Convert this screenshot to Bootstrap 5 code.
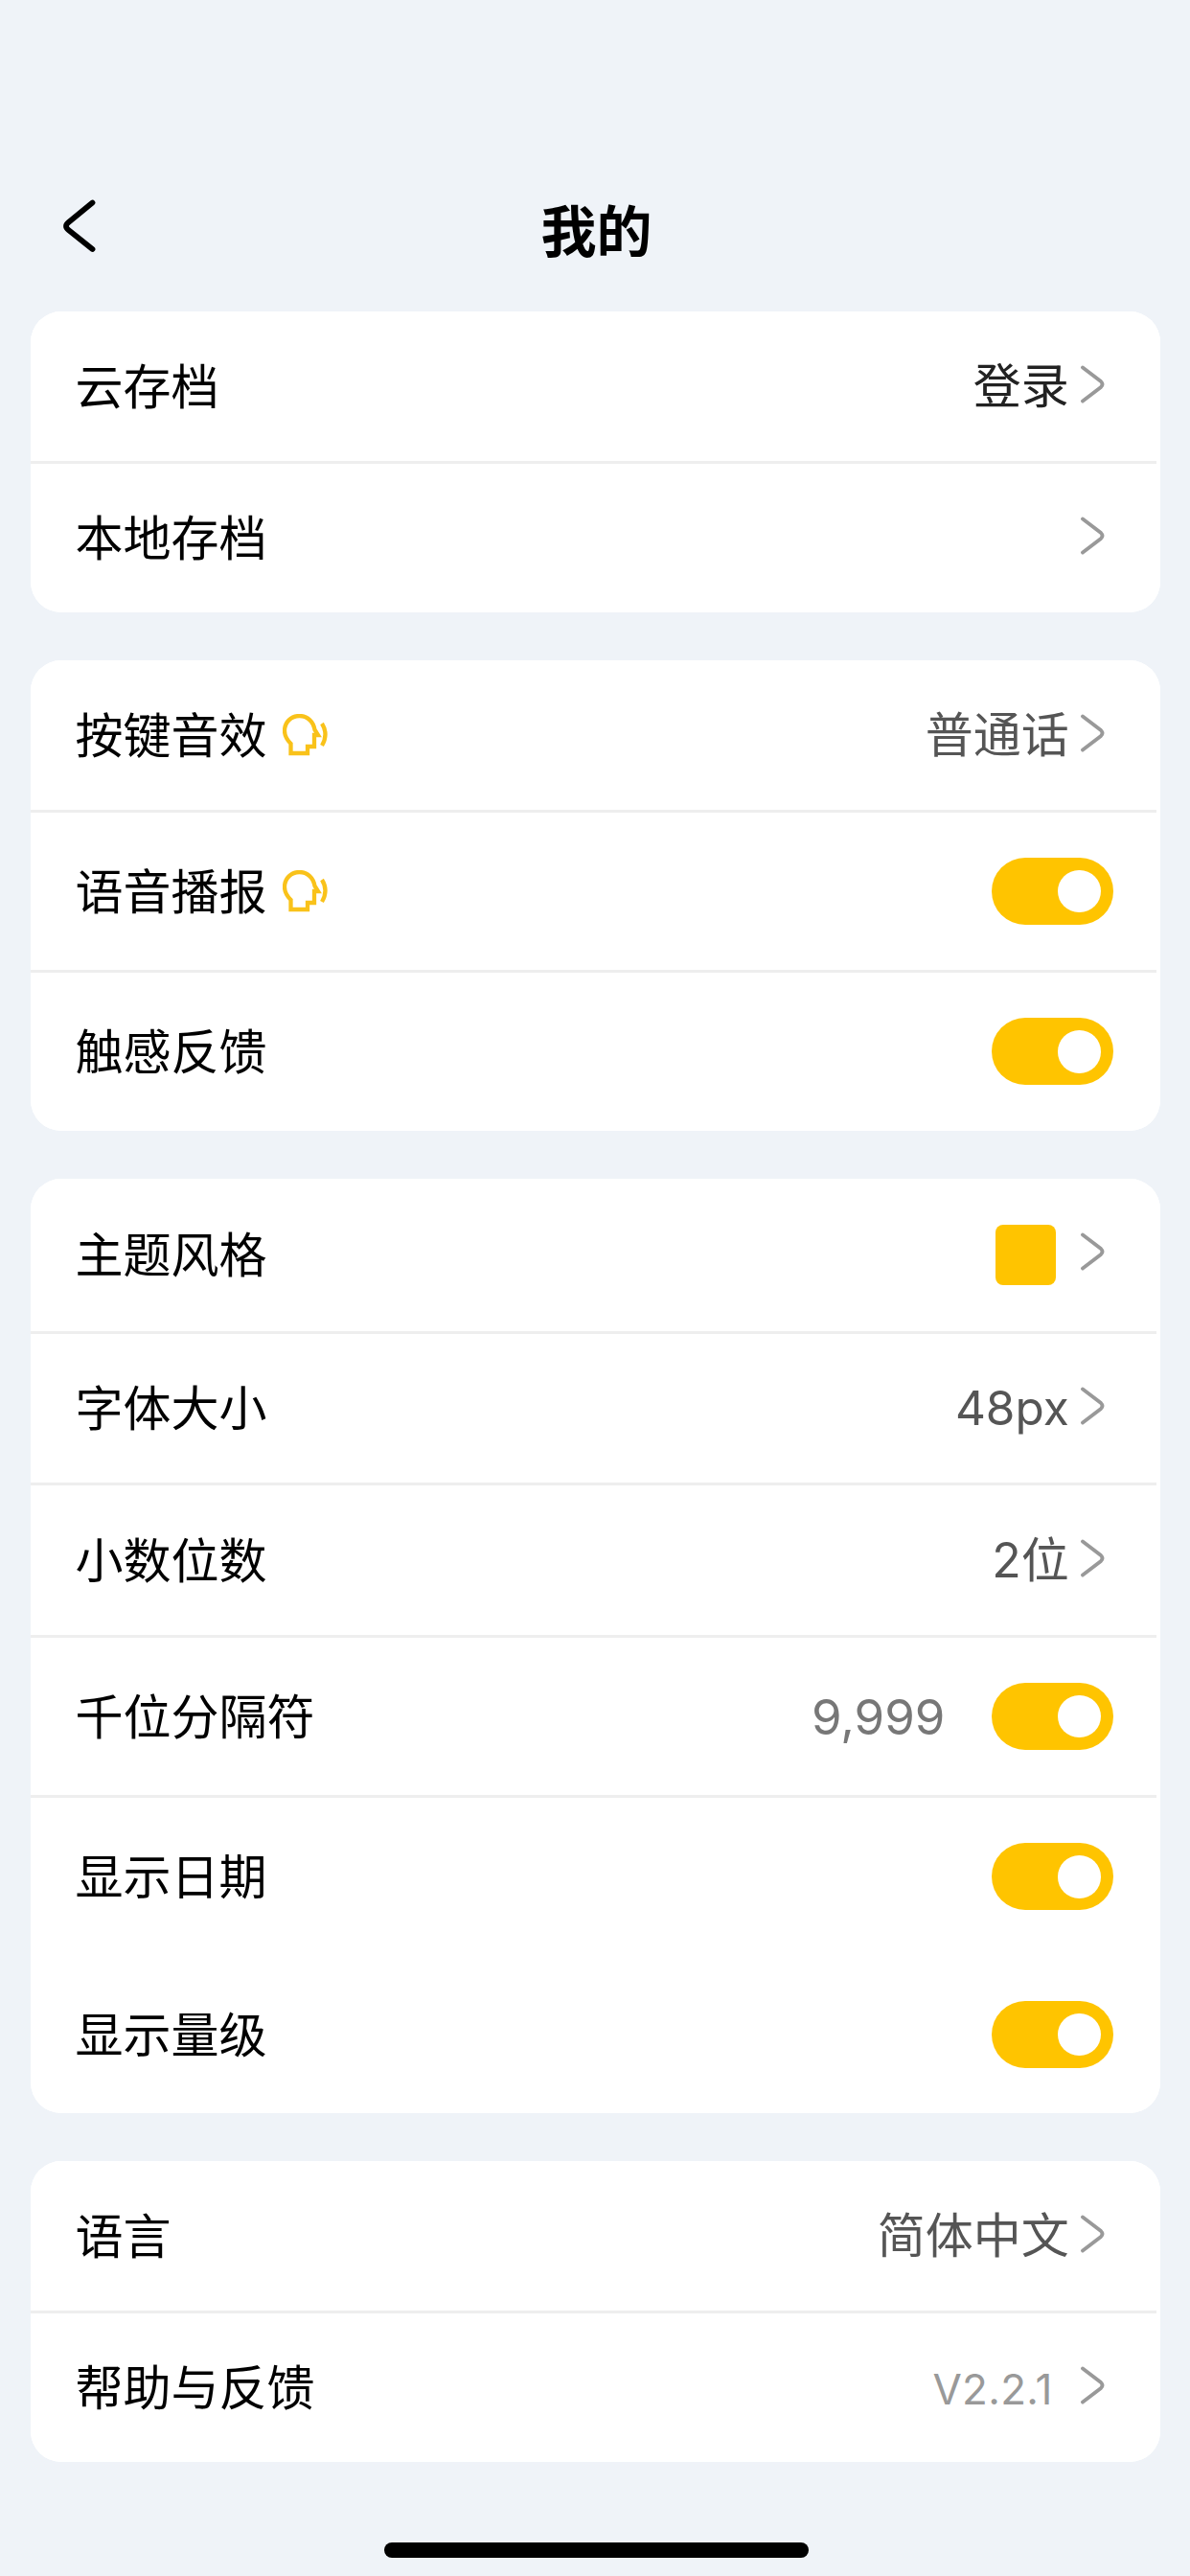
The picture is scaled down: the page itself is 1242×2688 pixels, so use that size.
<!DOCTYPE html>
<html lang="zh-CN">
<head>
<meta charset="utf-8">
<meta name="viewport" content="width=device-width, initial-scale=1">
<title>我的</title>
<link rel="stylesheet" href="https://cdn.jsdelivr.net/npm/bootstrap@5.3.0/dist/css/bootstrap.min.css">
<style>
  body { background: #eff3f8; color: #000; font-family: Inter, "Noto Sans CJK SC", sans-serif; font-size: 50px; line-height: 1; }
  .screen { height: 2688px; padding: 0 31px 0 32px; overflow: hidden; }
  .topbar { height: 325px; padding: 160px 0 0 33px; }
  .topbar h1 { font-size: 58px; font-weight: 700; line-height: 1; margin: 0; padding-top: 53px; }
  .topbar .side { width: 36px; padding-top: 47px; }
  .topbar .side-end { width: 67px; }
  .groups { gap: 50px; }
  .group { border-radius: 32px; overflow: hidden; background: #fff; }
  .item { height: 155.5px; padding: 0 49.5px 0 46.5px; background: #fff; color: #000; border: 0; }
  .item.tall { height: 164.5px; }
  .item.theme { height: 159px; }
  .item-label { padding-top: 2px; }
  .rule { height: 3px; margin-right: 4px; background: #eee; }
  .chev { width: 26px; height: 42px; margin: 0 8.8px 4px 11px; }
  .value { color: #555; padding-top: 1px; }
  .value-latin { font-size: 49.5px; padding-top: 0; }
  .value-login { color: #222; padding-top: 1px; }
  .sample { color: #777; font-size: 51px; margin-right: 48px; padding-top: 2px; }
  .version { color: #999; font-size: 44px; letter-spacing: .3px; margin-right: 17px; padding-top: 4px; }
  .voice { margin-left: 16px; }
  .toggle { width: 127px; height: 70px; border-radius: 35px; background: #ffc400; padding-right: 13px; }
  .knob { width: 44.5px; height: 44.5px; border-radius: 50%; background: #fff; }
  .swatch { width: 63px; height: 63px; border-radius: 8px; background: #ffc400; margin-right: 14px; }
  .item.theme .chev { margin-bottom: 7px; }
  .homebar { width: 443px; height: 16px; border-radius: 8px; background: #000; margin: 84px auto 0; transform: translateX(1px); }
</style>
</head>
<body>
<svg class="d-none">
  <symbol id="chev" viewBox="0 0 26 42"><path d="M3 3.500 L22 18 Q25 21 22 24 L3 38.500" fill="none" stroke="#999" stroke-width="3.800" stroke-linecap="round"/></symbol>
  <symbol id="voice" viewBox="0 0 48 44"><path d="M8.500 41 V31 C4.500 27 2 22.500 2 17.500 C2 8.500 9 2 17.500 2 C26 2 32 8 33.500 16.500 L37 22 H33 V34 H26 V41 Z M41 10 Q48 21 41 33" fill="none" stroke="#f9c21a" stroke-width="4.300"/></symbol>
</svg>
<main class="screen d-flex flex-column">
  <header class="topbar d-flex justify-content-between align-items-start">
    <div class="side"><svg class="d-block" width="36" height="58" viewBox="0 0 36 58"><path d="M31.500 4.500 L6.500 25 Q1.500 29 6.500 33 L31.500 53" fill="none" stroke="#000" stroke-width="5.800" stroke-linecap="round"/></svg></div>
    <h1>我的</h1>
    <div class="side-end"></div>
  </header>
  <div class="groups d-flex flex-column">
    <section class="group">
      <div class="item d-flex align-items-center"><span class="item-label me-auto">云存档</span><span class="value-login">登录</span><svg class="chev"><use href="#chev"/></svg></div>
      <div class="rule"></div>
      <div class="item d-flex align-items-center"><span class="item-label me-auto">本地存档</span><svg class="chev"><use href="#chev"/></svg></div>
    </section>
    <section class="group">
      <div class="item d-flex align-items-center"><span class="item-label">按键音效</span><svg class="voice me-auto" width="48" height="44"><use href="#voice"/></svg><span class="value">普通话</span><svg class="chev"><use href="#chev"/></svg></div>
      <div class="rule"></div>
      <div class="item tall d-flex align-items-center"><span class="item-label">语音播报</span><svg class="voice me-auto" width="48" height="44"><use href="#voice"/></svg><div class="toggle d-flex align-items-center justify-content-end"><div class="knob"></div></div></div>
      <div class="rule"></div>
      <div class="item tall d-flex align-items-center"><span class="item-label me-auto">触感反馈</span><div class="toggle d-flex align-items-center justify-content-end"><div class="knob"></div></div></div>
    </section>
    <section class="group">
      <div class="item theme d-flex align-items-center"><span class="item-label me-auto">主题风格</span><div class="swatch"></div><svg class="chev"><use href="#chev"/></svg></div>
      <div class="rule"></div>
      <div class="item d-flex align-items-center"><span class="item-label me-auto">字体大小</span><span class="value value-latin">48px</span><svg class="chev"><use href="#chev"/></svg></div>
      <div class="rule"></div>
      <div class="item d-flex align-items-center"><span class="item-label me-auto">小数位数</span><span class="value">2位</span><svg class="chev"><use href="#chev"/></svg></div>
      <div class="rule"></div>
      <div class="item tall d-flex align-items-center"><span class="item-label me-auto">千位分隔符</span><span class="sample">9,999</span><div class="toggle d-flex align-items-center justify-content-end"><div class="knob"></div></div></div>
      <div class="rule"></div>
      <div class="item tall d-flex align-items-center"><span class="item-label me-auto">显示日期</span><div class="toggle d-flex align-items-center justify-content-end"><div class="knob"></div></div></div>
      <div class="item tall d-flex align-items-center"><span class="item-label me-auto">显示量级</span><div class="toggle d-flex align-items-center justify-content-end"><div class="knob"></div></div></div>
    </section>
    <section class="group">
      <div class="item d-flex align-items-center"><span class="item-label me-auto">语言</span><span class="value">简体中文</span><svg class="chev"><use href="#chev"/></svg></div>
      <div class="rule"></div>
      <div class="item d-flex align-items-center"><span class="item-label me-auto">帮助与反馈</span><span class="version">V2.2.1</span><svg class="chev"><use href="#chev"/></svg></div>
    </section>
  </div>
  <div class="homebar"></div>
</main>
<script src="https://cdn.jsdelivr.net/npm/bootstrap@5.3.0/dist/js/bootstrap.bundle.min.js"></script>
</body>
</html>
